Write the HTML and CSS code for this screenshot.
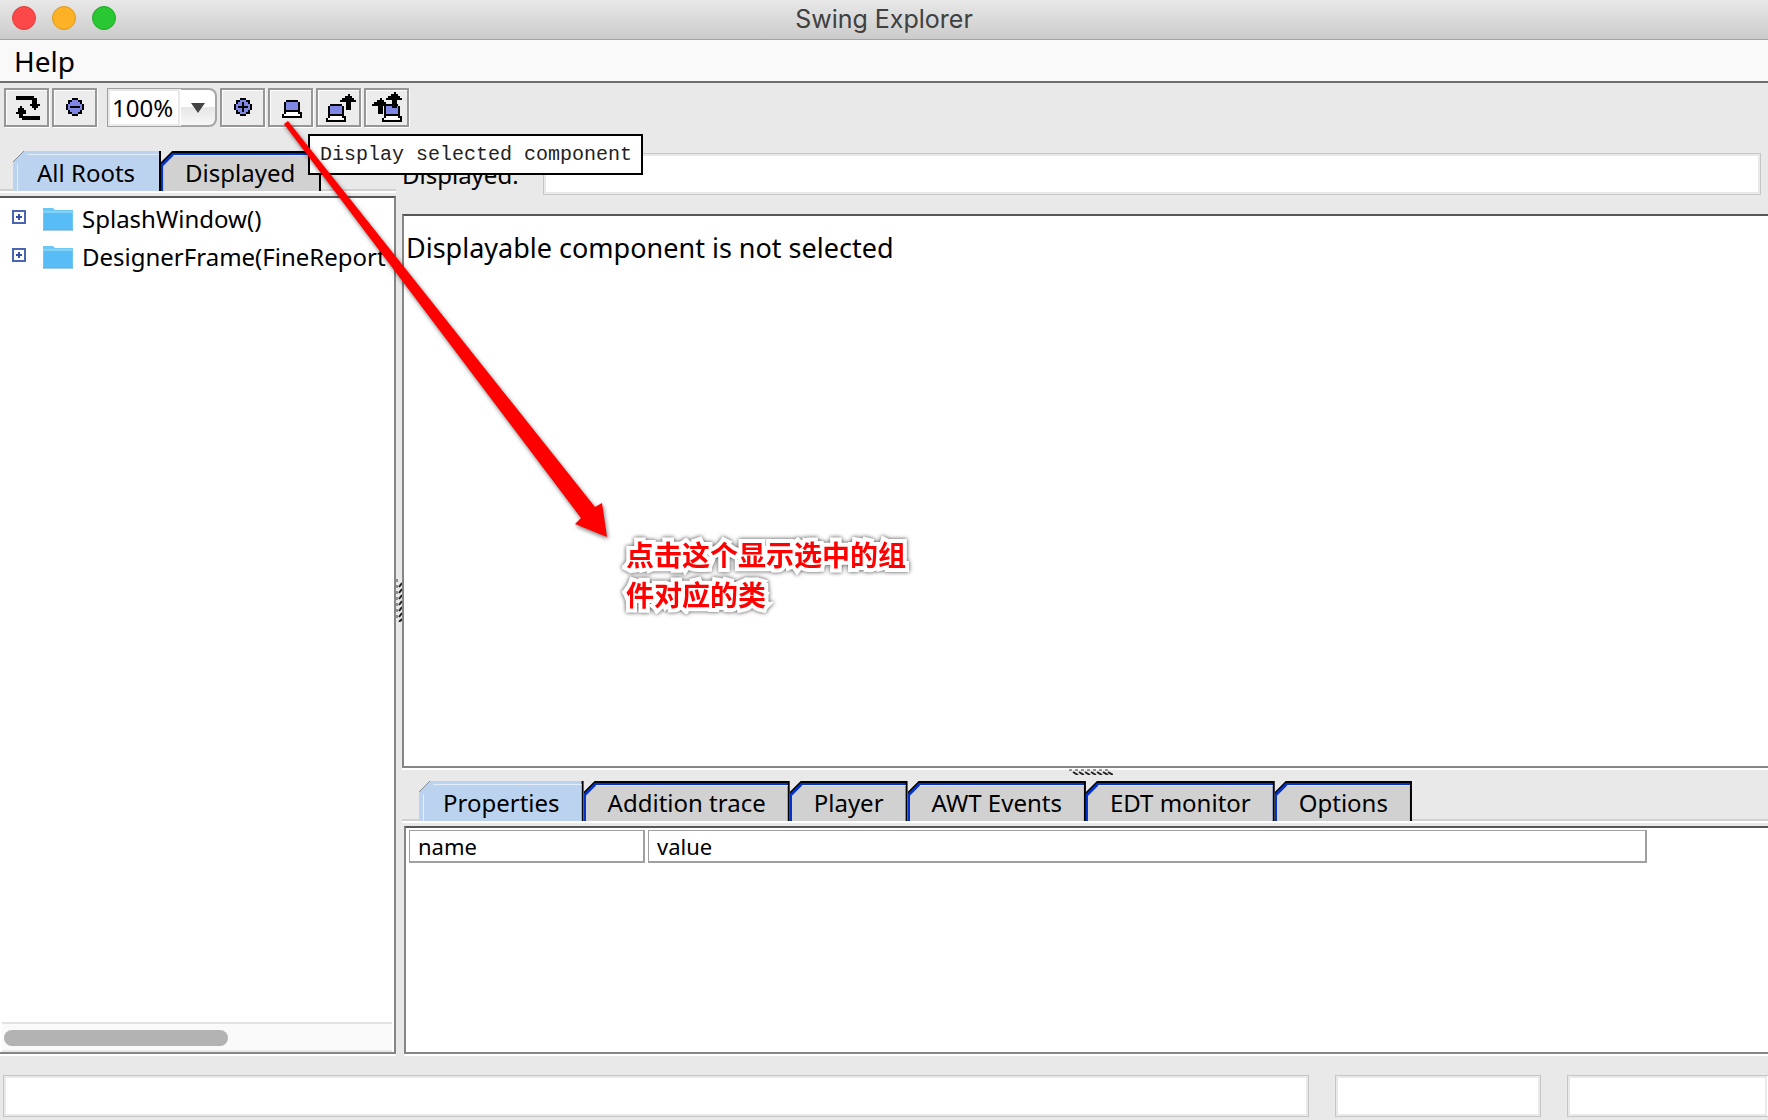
FILE: index.html
```html
<!DOCTYPE html>
<html lang="en">
<head>
<meta charset="utf-8">
<title>Swing Explorer</title>
<link rel="stylesheet" href="styles.css">
</head>
<body>
<header class="titlebar">
  <div class="lights"><span class="light red"></span><span class="light amber"></span><span class="light green"></span></div>
  <h1 class="title">Swing Explorer</h1>
</header>
<nav class="menubar"><button class="menu">Help</button></nav>

<div class="toolbar">
  <button class="tool" aria-label="Refresh"><svg viewBox="0 0 41 35" width="41" height="35"><path d="M10 6h18v2h3v6h3v2h-2v2h-2v2h-2v-2h-2v-2h-2v-2h2v-4H10zM14 16h2v2h2v2h2v4h-3v2h17v4H16v-2h-3v-4h-3v-2h2v-4h2z"/></svg></button>
  <button class="tool" aria-label="Zoom out"><svg viewBox="0 0 41 35" width="41" height="35"><use href="#disc"/><path d="M16 16h10v2H16z"/></svg></button>
  <div class="combo">
    <input class="combo-text" aria-label="Zoom" value="100%">
    <button class="combo-arrow" aria-label="Choose zoom"><svg viewBox="0 0 16 10" width="16" height="10"><path d="M1 0h14L8 10z" fill="#444"/></svg></button>
  </div>
  <button class="tool" aria-label="Zoom in"><svg viewBox="0 0 41 35" width="41" height="35"><use href="#disc"/><path d="M16 16h10v2H16zM20 12h2v10h-2z"/></svg></button>
  <div class="tool-wrap">
    <button class="tool" aria-label="Display selected component" aria-describedby="tip"><svg viewBox="0 0 41 35" width="41" height="35"><use href="#screen" x="12" y="10"/></svg></button>
    <div class="tooltip" id="tip" role="tooltip">Display selected component</div>
    <svg class="arrow" viewBox="0 0 340 430" width="340" height="430"><path d="M16 36l4-3L327 419l7-4 5 34-32-13 6-6z"/></svg>
  </div>
  <button class="tool" aria-label="Display parent component"><svg viewBox="0 0 41 35" width="41" height="35"><use href="#screen" x="8" y="14"/><use href="#up" x="22" y="4"/></svg></button>
  <button class="tool" aria-label="Display top component"><svg viewBox="0 0 41 35" width="41" height="35"><use href="#screen" x="16" y="14"/><use href="#up" x="20" y="2"/><use href="#up" x="6" y="8"/></svg></button>
</div>

<main class="split">
  <section class="side">
    <div class="tabs" role="tablist">
      <button class="tab selected" role="tab" aria-selected="true">All Roots</button>
      <button class="tab" role="tab">Displayed</button>
    </div>
    <div class="tree-pane">
      <ul class="tree">
        <li class="node"><button class="expander" aria-label="Expand"></button><svg class="folder" viewBox="0 0 30 24" width="30" height="24"><use href="#folder"/></svg><span>SplashWindow()</span></li>
        <li class="node"><button class="expander" aria-label="Expand"></button><svg class="folder" viewBox="0 0 30 24" width="30" height="24"><use href="#folder"/></svg><span>DesignerFrame(FineReport</span></li>
      </ul>
      <div class="scroll"><div class="thumb"></div></div>
    </div>
  </section>
  <div class="divider vertical"><svg width="6" height="43" viewBox="0 0 6 43"><path d="M1 0v41" stroke="#333" stroke-dasharray="3 3"/><path d="M3 8l3-4M3 14l3-4M3 20l3-4M3 26l3-4M3 32l3-4M3 38l3-4M3 43l3-3" stroke="#222" stroke-width="2"/></svg></div>
  <section class="content">
    <div class="path"><label for="shown">Displayed:</label><input class="field" id="shown"></div>
    <div class="canvas">
      <p class="message">Displayable component is not selected</p>
      <p class="note" lang="zh">点击这个显示选中的组件对应的类</p>
    </div>
    <div class="divider horizontal"><svg width="44" height="6" viewBox="0 0 44 6"><path d="M0 1h40" stroke="#333" stroke-dasharray="3 3"/><path d="M4 3l5 3M10 3l5 3M16 3l5 3M22 3l5 3M28 3l5 3M34 3l5 3M39 3l5 3" stroke="#222" stroke-width="2"/></svg></div>
    <div class="tabs" role="tablist">
      <button class="tab selected" role="tab" aria-selected="true">Properties</button>
      <button class="tab" role="tab">Addition trace</button>
      <button class="tab" role="tab">Player</button>
      <button class="tab" role="tab">AWT Events</button>
      <button class="tab" role="tab">EDT monitor</button>
      <button class="tab" role="tab">Options</button>
    </div>
    <div class="table-pane">
      <table class="props"><thead><tr><th class="name">name</th><th>value</th></tr></thead></table>
    </div>
  </section>
</main>

<footer class="status">
  <input class="field wide" aria-label="Status" readonly>
  <input class="field mid" aria-label="Mouse location" readonly>
  <input class="field end" aria-label="Measured size" readonly>
</footer>

<svg class="defs" width="0" height="0" aria-hidden="true">
  <symbol id="disc" overflow="visible"><path d="M18 8h6v2h4v4h2v6h-2v4h-4v2h-6v-2h-4v-4h-2v-6h2v-4h4z"/><path d="M18 10h6v2h2v2h2v6h-2v2h-2v2h-6v-2h-2v-2h-2v-6h2v-2h2z" fill="#7f86e4"/></symbol>
  <symbol id="screen" overflow="visible"><path d="M4 0h12v2h2v10h2v6H0v-4h2V2h2z"/><path d="M4 2h12v8H4z" fill="#7f86e4"/><path d="M4 12h12v2h2v2H2v-2h2z" fill="#fff"/></symbol>
  <symbol id="up" overflow="visible"><path d="M8 0h2v2h2v2h2v2h2v2h-5v8H6V8H0V6h2V4h3V2h3z"/></symbol>
  <symbol id="folder" viewBox="0 0 30 24"><path d="M0 1h10l2 2h18v20H0z" fill="#6bc8f5"/><path d="M1 6h28v16H1z" fill="#58bdf6"/><path d="M0 5h30" stroke="#9cdcf8"/><path d="M0 23h30" stroke="#4a9fd0"/></symbol>
</svg>
</body>
</html>
```
FILE: styles.css
```css
* { box-sizing: border-box; }
body {
  margin: 0;
  min-height: 100vh;
  display: flex;
  flex-direction: column;
  overflow-x: hidden;
  background: #e9e9e9;
  color: #000;
  font: 24px/32px "Noto Sans", sans-serif;
}
button, input { font: inherit; color: inherit; margin: 0; padding: 0; border-radius: 0; }

.titlebar {
  display: grid;
  grid-template-columns: 1fr auto 1fr;
  align-items: center;
  height: 40px;
  padding: 0 12px 3px;
  border-bottom: 1px solid #a3a3a3;
  background: linear-gradient(#e8e8e8, #cbcbcb);
}
.lights { display: flex; gap: 16px; }
.light { width: 24px; height: 24px; border-radius: 50%; border: 1px solid; }
.red { background: #fc4848; border-color: #e03b3b; }
.amber { background: #fdb225; border-color: #dd981c; }
.green { background: #29c731; border-color: #1da827; }
.title { margin: 0; padding-top: 2px; font: 400 25px/32px Inter, sans-serif; color: #404040; }

.menubar { height: 43px; border-bottom: 2px solid #6e6e6e; background: #f9f9f9; }
.menu { height: 41px; padding: 0 14px; border: 0; background: none; font-size: 28px; line-height: 40px; }

.toolbar { display: flex; gap: 3px; padding: 5px 4px 4px; }
.tool {
  display: block;
  width: 45px;
  height: 39px;
  border: 2px solid #979797;
  background: #ececec;
  box-shadow: inset 1px 1px #fff, 1px 1px #fff;
}
.tool svg, .folder, .combo-arrow svg, .divider svg { display: block; }
.combo { display: flex; width: 110px; height: 39px; margin: 0 0 0 7px; }
.combo-text {
  width: 74px;
  border: 1px solid #a0a0a0;
  border-right: 0;
  outline: 2px solid #e9e9e9;
  outline-offset: -3px;
  background: #fff;
  text-indent: 4px;
}
.combo-arrow {
  display: grid;
  place-items: center;
  flex: 1;
  border: 2px solid #a5a5a5;
  border-left: 0;
  border-radius: 0 8px 8px 0;
  background: linear-gradient(#fff 50%, #e6e6e6 50%, #f8f8f8);
}
.tool-wrap { position: relative; }
.tooltip {
  position: absolute;
  z-index: 2;
  left: 40px;
  top: 46px;
  height: 41px;
  padding: 0 9px 0 10px;
  border: 2px solid #000;
  background: #fff;
  color: #222;
  font: 20px/37px "Liberation Mono", monospace;
  white-space: pre;
}
.arrow {
  position: absolute;
  z-index: 3;
  left: 0;
  top: 0;
  overflow: visible;
  pointer-events: none;
  fill: #f00;
  filter: drop-shadow(1px 2px 2px #0008);
}

.split {
  flex: 1;
  display: grid;
  grid-template-columns: 396px 6px minmax(0, 1fr);
  padding-top: 20px;
}
.side, .content { display: flex; flex-direction: column; min-width: 0; }

.tabs {
  display: flex;
  height: 42px;
  margin-bottom: 3px;
  padding: 0 17px 2px 13px;
  background: linear-gradient(#d0d0d0, #d0d0d0) 0 38px / 100% 2px no-repeat, linear-gradient(#fff, #fff) 0 40px / 100% 2px no-repeat;
}
.tab {
  position: relative;
  isolation: isolate;
  height: 40px;
  padding: 4px 24px 0;
  border: 0;
  background: #000;
  clip-path: polygon(0 11px, 11px 0, 100% 0, 100% 100%, 0 100%);
  white-space: nowrap;
}
.tab::before, .tab::after {
  content: "";
  position: absolute;
  z-index: -1;
  inset: 2px 2px 0 0;
  background: #0433cc;
  clip-path: polygon(0 11px, 11px 0, 100% 0, 100% 100%, 0 100%);
}
.tab::after { inset: 4px 2px 0 2px; background: #d1d1d1; border-top: 1px solid #e6e6e6; }
.tab.selected::before { inset: 0 2px 0 0; background: #bcd3f0; }
.tab.selected::after { inset: 3px 2px 0 4px; background: #bcd3f0; border: 1px solid #e3edf9; border-width: 1px 0 0 1px; }
.side .tab { padding: 4px 26px 0 24px; }

.tree-pane {
  flex: 1;
  display: flex;
  flex-direction: column;
  border: 2px solid #868686;
  border-top-color: #575757;
  border-left: 0;
  background: #fff;
  box-shadow: 0 2px #fff;
}
.tree { flex: 1; margin: 0; padding: 2px 0 0; list-style: none; }
.node { display: flex; align-items: center; height: 38px; padding-left: 12px; overflow: hidden; white-space: nowrap; }
.expander {
  flex: none;
  width: 14px;
  height: 14px;
  margin: 0 17px 4px 0;
  border: 2px solid #4a66b0;
  background:
    linear-gradient(#3550a8, #3550a8) center / 6px 2px no-repeat,
    linear-gradient(#3550a8, #3550a8) center / 2px 6px no-repeat,
    #fff;
}
.folder { flex: none; margin-right: 9px; }
.scroll { height: 30px; margin: 0 2px; padding: 6px 2px; border-top: 2px solid #e2e2e2; border-bottom: 2px solid #e8e8e8; background: #fafafa; }
.thumb { width: 58%; height: 16px; border-radius: 8px; background: #b3b3b3; }

.divider { display: flex; align-items: center; justify-content: center; }
.vertical { padding-bottom: 5px; }
.horizontal { height: 13px; padding: 0 0 6px 12px; }

.path { display: flex; align-items: flex-start; gap: 24px; padding: 2px 7px 19px 0; }
.path label { padding-top: 6px; }
.field {
  height: 42px;
  border: 1px solid #c6c6c6;
  outline: 2px solid #e9e9e9;
  outline-offset: -3px;
  background: #fff;
}
.path .field { flex: 1; min-width: 0; }
.canvas {
  flex: 1;
  border: 2px solid #868686;
  border-top-color: #575757;
  border-right: 0;
  background: #fff;
  box-shadow: 0 2px #fff;
}
.message { margin: 0; padding: 16px 2px; font-size: 27px; }
.note {
  width: 290px;
  margin: 254px 0 0 222px;
  color: #f00;
  font: 700 28px/40px "Noto Sans CJK SC", sans-serif;
  -webkit-text-stroke: 8px #fff;
  stroke-linejoin: round;
  paint-order: stroke fill;
  filter: drop-shadow(0 0 2px #000b);
}
.content .tabs { padding: 0 17px 2px; }
.table-pane {
  height: 228px;
  margin-left: 2px;
  padding: 2px 0;
  border: 2px solid #868686;
  border-top-color: #575757;
  border-right: 0;
  background: #fff;
  box-shadow: 0 2px #fff;
}
.props { width: calc(100% - 118px); table-layout: fixed; border-collapse: separate; border-spacing: 3px 0; font-size: 22px; }
.props th { height: 33px; padding: 0 8px; border: 1px solid #a0a0a0; border-bottom-width: 2px; border-right-width: 2px; font-weight: 400; line-height: 28px; text-align: left; }
.props .name { width: 236px; }

.status { display: flex; gap: 26px; padding: 21px 0 3px 3px; }
.wide { flex: 1; min-width: 0; }
.mid { width: 206px; }
.end { width: 201px; border-right: 0; }
.defs { position: absolute; top: 0; }
```
